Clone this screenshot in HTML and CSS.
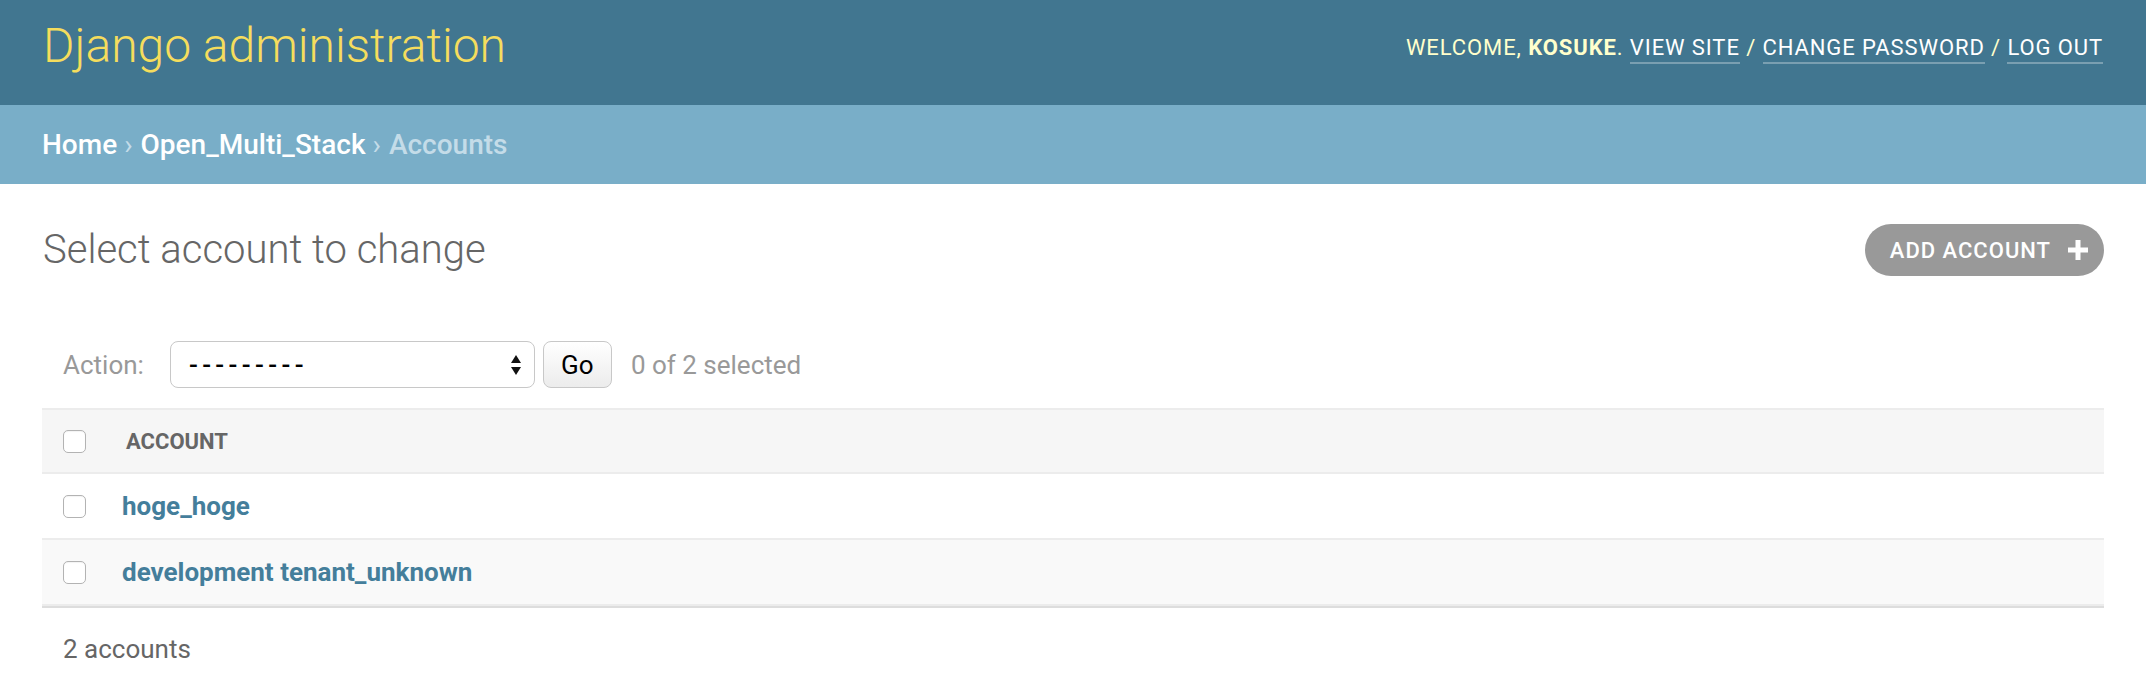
FILE: index.html
```html
<!DOCTYPE html>
<html lang="en">
<head>
<meta charset="utf-8">
<title>Select account to change | Django site admin</title>
<link rel="stylesheet" href="styles.css">
</head>
<body>
<div class="header">
  <div class="branding">Django administration</div>
  <div class="user-tools">Welcome, <strong>kosuke</strong>. <a href="#">View site</a> / <a href="#">Change password</a> / <a href="#">Log out</a></div>
</div>
<div class="breadcrumbs"><a href="#">Home</a><span class="sep">›</span><a href="#">Open_Multi_Stack</a><span class="sep">›</span><span class="current">Accounts</span></div>
<div class="content">
  <div class="title-row">
    <h1>Select account to change</h1>
    <a class="addlink" href="#">Add account
      <svg class="plus" width="20" height="20" viewBox="0 0 20 20"><path d="M7.5 0h5v7.5H20v5h-7.5V20h-5v-7.5H0v-5h7.5z" fill="#fff"/></svg>
    </a>
  </div>
  <div class="actions">
    <span class="action-label">Action:</span>
    <div class="select">
      <span class="select-text">---------</span>
      <svg class="select-arrows" width="12" height="22" viewBox="0 0 12 22"><path d="M6 1L11 9H1z M6 21L1 13H11z" fill="#111"/></svg>
    </div>
    <button class="go" type="button">Go</button>
    <span class="counter">0 of 2 selected</span>
  </div>
  <table class="results">
    <thead>
      <tr><th class="cb-col"><span class="cb"></span></th><th class="col-head">Account</th></tr>
    </thead>
    <tbody>
      <tr class="row1"><td class="cb-col"><span class="cb"></span></td><th class="field"><a href="#">hoge_hoge</a></th></tr>
      <tr class="row2"><td class="cb-col"><span class="cb"></span></td><th class="field"><a href="#">development tenant_unknown</a></th></tr>
    </tbody>
  </table>
  <p class="paginator">2 accounts</p>
</div>
</body>
</html>
```
FILE: styles.css
```css
html, body {
  margin: 0;
  padding: 0;
  background: #fff;
  font-family: Roboto, "Liberation Sans", sans-serif;
  color: #333;
}
a { text-decoration: none; }

.header {
  height: 105px;
  box-sizing: border-box;
  padding: 0 43px 14px 42px;
  background: #417690;
  display: flex;
  align-items: center;
  justify-content: space-between;
}
.branding {
  font-size: 48px;
  font-weight: 300;
  line-height: 56px;
  color: #f5dd5d;
  margin-left: 1px;
}
.user-tools {
  font-size: 22px;
  line-height: 30px;
  letter-spacing: 0.9px;
  text-transform: uppercase;
  color: #ffc;
  padding-top: 4px;
}
.user-tools strong { font-weight: 700; }
.user-tools a {
  color: #fff;
  border-bottom: 2px solid rgba(255,255,255,0.3);
  padding-bottom: 2px;
}

.breadcrumbs {
  background: #79aec8;
  padding: 20px 42px;
  height: 39px;
  line-height: 39px;
  font-size: 28px;
  font-weight: 500;
  color: #c4dce8;
}
.breadcrumbs a { color: #fff; }
.breadcrumbs .sep { margin: 0 8px 0 7px; color: #c4dce8; font-weight: 400; }

.content {
  padding: 40px 42px 0 42px;
}
.title-row {
  display: flex;
  align-items: center;
  justify-content: space-between;
  height: 52px;
}
.title-row h1 {
  margin: 0;
  font-size: 40px;
  font-weight: 300;
  color: #666;
  line-height: 52px;
  margin-left: 1px;
}
.addlink {
  display: flex;
  align-items: center;
  height: 52px;
  box-sizing: border-box;
  padding: 0 16px 0 25px;
  border-radius: 26px;
  background: #999;
  color: #fff;
  font-size: 22px;
  font-weight: 500;
  letter-spacing: 1px;
  text-transform: uppercase;
}
.addlink .plus { margin-left: 17px; }

.actions {
  margin-top: 45px;
  padding: 20px 21px;
  display: flex;
  align-items: center;
  height: 47px;
  color: #999;
  font-size: 26px;
}
.action-label { margin-right: 26px; }
.select {
  width: 365px;
  height: 47px;
  box-sizing: border-box;
  border: 1.5px solid #c8c8c8;
  border-radius: 8px;
  background: #fff;
  display: flex;
  align-items: center;
  justify-content: space-between;
  padding: 0 12px 0 18px;
  color: #000;
  font-size: 26px;
}
.select-text { letter-spacing: 4.4px; font-weight: 500; }
.go {
  margin-left: 8px;
  width: 69px;
  height: 47px;
  border: 1.5px solid #c8c8c8;
  border-radius: 8px;
  background: linear-gradient(#fff, #ececec);
  font-family: Roboto, "Liberation Sans", sans-serif;
  font-size: 26px;
  color: #000;
  padding: 0;
}
.counter { margin-left: 19px; }

.results {
  width: 100%;
  border-collapse: collapse;
}
.results th, .results td {
  padding: 0;
  text-align: left;
  vertical-align: middle;
}
.results thead th {
  background: #f6f6f6;
  border-top: 2px solid #ececec;
  border-bottom: 2px solid #ececec;
  height: 62px;
}
.results tbody td, .results tbody th {
  border-bottom: 2px solid #ececec;
  height: 64px;
}
.results tbody tr.row2 td, .results tbody tr.row2 th { background: #f9f9f9; }
.cb-col {
  width: 80px;
  padding-left: 21px !important;
  box-sizing: border-box;
}
.cb {
  display: block;
  width: 23px;
  height: 23px;
  box-sizing: border-box;
  border: 1.5px solid #b3b3b3;
  border-radius: 5px;
  background: #fff;
  box-shadow: inset 0 1px 1px rgba(0,0,0,0.05);
}
.col-head {
  font-size: 22px;
  font-weight: 700;
  color: #666;
  text-transform: uppercase;
  padding-left: 4px !important;
}
.field { font-weight: 700; font-size: 26px; }
.field a { color: #447e9b; }

.paginator {
  margin: 0;
  border-top: 2px solid #ddd;
  padding: 26px 21px;
  font-size: 26px;
  line-height: 30px;
  color: #666;
}
```
